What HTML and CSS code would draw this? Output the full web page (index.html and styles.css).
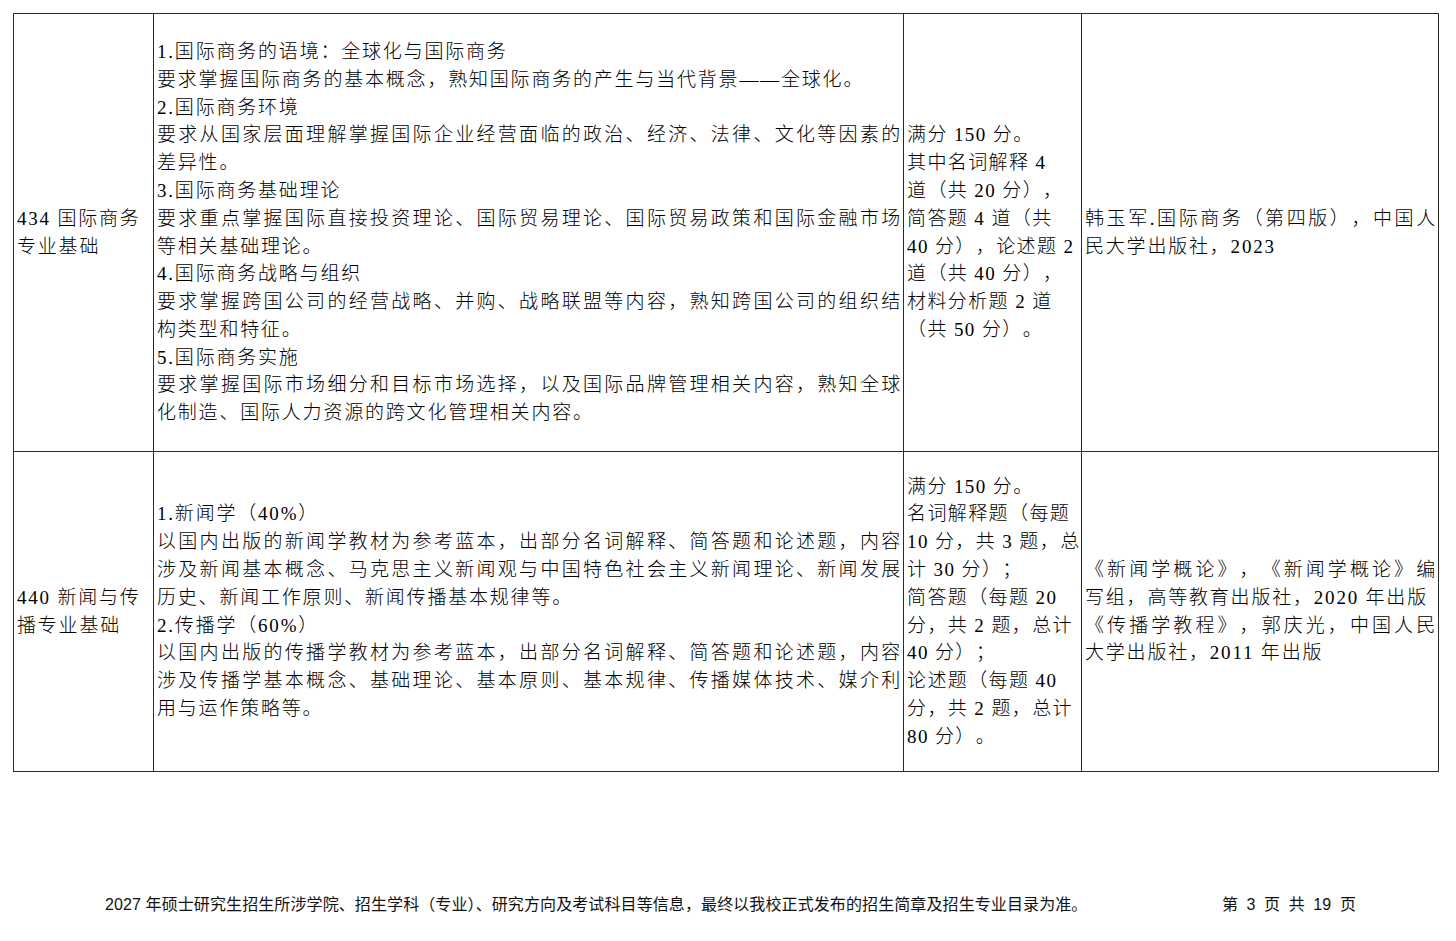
FILE: index.html
```html
<!DOCTYPE html>
<html lang="zh-CN">
<head>
<meta charset="utf-8">
<title>考试科目</title>
<link rel="stylesheet" href="styles.css">
</head>
<body>
<div class="page">
  <table class="exam">
    <colgroup>
      <col class="c-name">
      <col class="c-scope">
      <col class="c-score">
      <col class="c-book">
    </colgroup>
    <tbody>
      <tr class="row-a">
        <td class="name">434 国际商务专业基础</td>
        <td class="scope">
          <p>1.国际商务的语境：全球化与国际商务</p>
          <p>要求掌握国际商务的基本概念，熟知国际商务的产生与当代背景——全球化。</p>
          <p>2.国际商务环境</p>
          <p>要求从国家层面理解掌握国际企业经营面临的政治、经济、法律、文化等因素的差异性。</p>
          <p>3.国际商务基础理论</p>
          <p>要求重点掌握国际直接投资理论、国际贸易理论、国际贸易政策和国际金融市场等相关基础理论。</p>
          <p>4.国际商务战略与组织</p>
          <p>要求掌握跨国公司的经营战略、并购、战略联盟等内容，熟知跨国公司的组织结构类型和特征。</p>
          <p>5.国际商务实施</p>
          <p>要求掌握国际市场细分和目标市场选择，以及国际品牌管理相关内容，熟知全球化制造、国际人力资源的跨文化管理相关内容。</p>
        </td>
        <td class="score">满分 150 分。<br>其中名词解释 4<br>道（共 20 分），<br>简答题 4 道（共<br>40 分），论述题 2<br>道（共 40 分），<br>材料分析题 2 道<br>（共 50 分）。</td>
        <td class="book">韩玉军.国际商务（第四版），中国人民大学出版社，2023</td>
      </tr>
      <tr class="row-b">
        <td class="name">440 新闻与传播专业基础</td>
        <td class="scope">
          <p>1.新闻学（40%）</p>
          <p>以国内出版的新闻学教材为参考蓝本，出部分名词解释、简答题和论述题，内容涉及新闻基本概念、马克思主义新闻观与中国特色社会主义新闻理论、新闻发展历史、新闻工作原则、新闻传播基本规律等。</p>
          <p>2.传播学（60%）</p>
          <p>以国内出版的传播学教材为参考蓝本，出部分名词解释、简答题和论述题，内容涉及传播学基本概念、基础理论、基本原则、基本规律、传播媒体技术、媒介利用与运作策略等。</p>
        </td>
        <td class="score">满分 150 分。<br>名词解释题（每题<br>10 分，共 3 题，总<br>计 30 分）；<br>简答题（每题 20<br>分，共 2 题，总计<br>40 分）；<br>论述题（每题 40<br>分，共 2 题，总计<br>80 分）。</td>
        <td class="book">
          <p>《新闻学概论》，《新闻学概论》编写组，高等教育出版社，2020 年出版</p>
          <p>《传播学教程》，郭庆光，中国人民大学出版社，2011 年出版</p>
        </td>
      </tr>
    </tbody>
  </table>
  <footer class="foot">
    <span class="note">2027 年硕士研究生招生所涉学院、招生学科（专业）、研究方向及考试科目等信息，最终以我校正式发布的招生简章及招生专业目录为准。</span>
    <span class="pageno">第 3 页 共 19 页</span>
  </footer>
</div>
</body>
</html>
```

FILE: styles.css
```css
html, body {
  margin: 0;
  padding: 0;
  background: #ffffff;
  color: #000000;
}

.page {
  width: 1456px;
  padding: 13px 0 0 13px;
  box-sizing: border-box;
}

.exam {
  border-collapse: collapse;
  table-layout: fixed;
  width: 1425px;
  font-family: "Liberation Serif", "Noto Sans CJK SC", serif;
  font-size: 19px;
  font-weight: 300;
  letter-spacing: 1.8px;
  line-height: 27.8px;
  text-spacing-trim: space-all;
}

.c-name { width: 140px; }
.c-scope { width: 750px; }
.c-score { width: 178px; }
.c-book { width: 357px; }

.exam td {
  border: 1px solid #2b2b2b;
  vertical-align: middle;
  padding: 0 1px 0 3px;
  text-align: justify;
}

.exam p {
  margin: 0;
}

.row-a { height: 438px; }
.row-b { height: 320px; }

.exam td.name {
  text-align: left;
}

.exam td.score {
  text-align: left;
  white-space: nowrap;
  letter-spacing: 1.4px;
}

.foot {
  display: flex;
  justify-content: space-between;
  align-items: center;
  margin-top: 123px;
  padding: 0 100px 0 92px;
  font-family: "Liberation Sans", "Noto Sans CJK SC", sans-serif;
  font-size: 16px;
  letter-spacing: 0.1px;
  line-height: 20px;
  color: #111111;
}

.pageno {
  word-spacing: 4px;
}
```
